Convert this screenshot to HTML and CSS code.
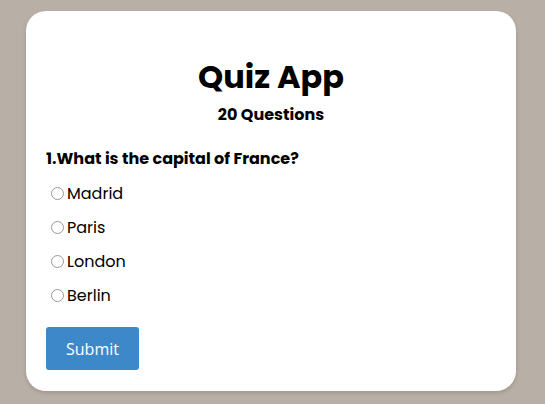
FILE: index.html
```html
<!DOCTYPE html>
<html>
<head>
<meta charset="utf-8">
<link rel="stylesheet" href="styles.css">
</head>
<body>
<div class="card">
  <h1 class="title">Quiz App</h1>
  <h3 class="subtitle">20 Questions</h3>
  <p class="question">1.What is the capital of France?</p>
  <ul class="options">
    <li class="option"><input type="radio" name="q1" class="radio"><span>Madrid</span></li>
    <li class="option"><input type="radio" name="q1" class="radio"><span>Paris</span></li>
    <li class="option"><input type="radio" name="q1" class="radio"><span>London</span></li>
    <li class="option"><input type="radio" name="q1" class="radio"><span>Berlin</span></li>
  </ul>
  <button class="submit">Submit</button>
</div>
</body>
</html>
```
FILE: styles.css
```css
html, body {
  margin: 0;
  padding: 0;
}
body {
  background: #b8b0a7;
  font-family: Poppins, Inter, "Noto Sans", sans-serif;
  padding: 11px 29px 14px 26px;
}
.card {
  background: #fff;
  width: 490px;
  box-sizing: border-box;
  border-radius: 20px;
  padding: 20px 20px 21px 20px;
  box-shadow: 0 2px 4px rgba(0,0,0,0.15);
}
.title {
  margin: 27px 0 0;
  text-align: center;
  font-size: 32px;
  font-weight: 700;
  line-height: 1.2;
}
.subtitle {
  margin: 7px 0 0;
  text-align: center;
  font-size: 16px;
  font-weight: 700;
  line-height: 1.5;
}
.question {
  margin: 20px 0 0;
  font-size: 16px;
  font-weight: 700;
  line-height: 1.5;
}
.options {
  list-style: none;
  margin: 5px 0 0;
  padding: 0;
}
.option {
  display: flex;
  align-items: center;
  height: 34px;
  font-size: 16px;
}
.radio {
  -webkit-appearance: none;
  appearance: none;
  box-sizing: border-box;
  margin: 0 3px 0 5px;
  width: 13px;
  height: 13px;
  border: 1px solid #9a9a9a;
  border-radius: 50%;
  background: #fff;
}
.submit {
  margin-top: 15px;
  background: #3d88c9;
  color: #fff;
  border: none;
  border-radius: 3px;
  font-family: "Open Sans", sans-serif;
  font-size: 16px;
  width: 93px;
  height: 43px;
}
```
